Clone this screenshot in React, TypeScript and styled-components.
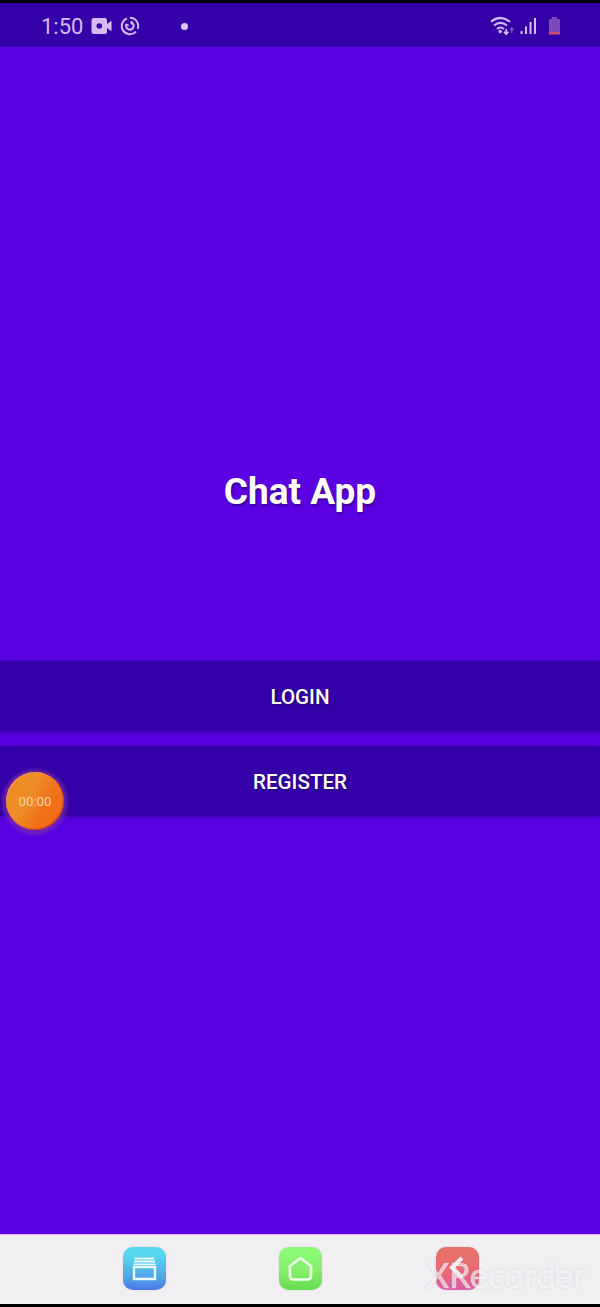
import React from 'react';
import styled, { createGlobalStyle } from 'styled-components';

const GlobalStyle = createGlobalStyle`
  * { box-sizing: border-box; }
  body { margin: 0; background: #000; }
`;

const Screen = styled.div`
  position: relative;
  display: flex;
  flex-direction: column;
  width: 600px;
  height: 1307px;
  padding: 3px 0;
  overflow: hidden;
  background: #000;
  font-family: Roboto, 'Liberation Sans', sans-serif;
`;

const StatusBar = styled.header`
  display: flex;
  justify-content: space-between;
  flex: 0 0 44px;
  padding: 2px 39px 0 41px;
  background: #3400a8;
  color: #d6bcf5;
`;

const StatusGroup = styled.div`
  display: flex;
  align-items: center;
`;

const Clock = styled.span`
  width: 50px;
  padding-top: 2px;
  font-size: 22px;
  line-height: 40px;
`;

const Dot = styled.span`
  width: 7px;
  height: 7px;
  margin-left: 41px;
  border-radius: 50%;
  background: #dcc8fa;
`;

const Content = styled.main`
  display: flex;
  flex-direction: column;
  flex: 1;
  background: #5a00e2;
`;

const Title = styled.h1`
  margin: 423px 0 0;
  height: 44px;
  color: #fff;
  font-size: 37px;
  font-weight: 700;
  line-height: 44px;
  text-align: center;
  text-shadow: 1px 2px 2px rgba(30, 0, 100, 0.6);
`;

const Actions = styled.div`
  display: flex;
  flex-direction: column;
  gap: 15px;
  margin-top: 147px;
`;

const ActionButton = styled.button`
  height: 70px;
  padding: 2px 0 0;
  border: 0;
  background: #3400a8;
  box-shadow: 0 1px 4px rgba(45, 0, 140, 0.75);
  color: #fff;
  font-family: inherit;
  font-size: 20.6px;
  font-weight: 500;
  line-height: 68px;
  text-shadow: 1px 1px 2px rgba(20, 0, 60, 0.6);
`;

const RecorderBubble = styled.div`
  position: absolute;
  left: 6px;
  top: 772px;
  width: 58px;
  height: 58px;
  border-radius: 50%;
  background: linear-gradient(120deg, #ee8d26 40%, #f07018 66%);
  box-shadow: inset 1px 1px 1px #f48a60, inset -1px -1px 1px #c43c28,
    0 1px 3px 4px rgba(125, 55, 165, 0.55);
  color: #f6d3a5;
  font-size: 13.3px;
  line-height: 59px;
  text-align: center;
`;

const NavBar = styled.nav`
  display: flex;
  gap: 113.4px;
  flex: 0 0 70px;
  padding: 12px 0 0 123px;
  border-top: 1px solid #d9b6f7;
  background: #f1eff2;
`;

const NavTile = styled.div<{ $fill: string }>`
  display: flex;
  align-items: center;
  justify-content: center;
  width: 43px;
  height: 43px;
  border-radius: 10px;
  background: ${({ $fill }) => $fill};
  box-shadow: 0 0 1px rgba(90, 90, 100, 0.5);
`;

const Watermark = styled.div`
  position: absolute;
  left: 427px;
  top: 1254px;
  color: rgba(255, 255, 255, 0.6);
  font-family: Lato, sans-serif;
  font-size: 34px;
  line-height: 42px;
  letter-spacing: 0.3px;
  -webkit-text-stroke: 0.7px rgba(255, 255, 255, 0.6);
  text-shadow: 0 0 3px rgba(120, 110, 130, 0.28);
  white-space: nowrap;
`;

const StatusIcon = styled.svg<{ $gap?: number }>`
  display: block;
  margin-left: ${({ $gap = 0 }) => $gap}px;
`;

export default function App() {
  return (
    <>
      <GlobalStyle />
      <Screen>
        <StatusBar>
          <StatusGroup>
            <Clock>1:50</Clock>
            <StatusIcon width="22" height="18" viewBox="0 0 22 18">
              <path fill="currentColor" fillRule="evenodd" d="M3 1h10.500a2.500 2.500 0 0 1 2.500 2.500V7l4.500-3.200v10.400L16 11v3.500a2.500 2.500 0 0 1-2.500 2.500H3A2.500 2.500 0 0 1 .500 14.500v-11A2.500 2.500 0 0 1 3 1Zm5.300 5.200a2.800 2.800 0 1 0 0 5.600 2.800 2.800 0 0 0 0-5.600Z" />
            </StatusIcon>
            <StatusIcon $gap={7} width="20" height="20" viewBox="0 0 20 20" fill="none" stroke="currentColor" strokeWidth="2">
              <path d="M10 1.800a8.200 8.200 0 0 1 7.700 11M16 15.600A8.200 8.200 0 1 1 7 2.400" />
              <path d="M6.500 9a3.600 3.600 0 1 0 5-2.300" strokeWidth="2" />
              <path d="M5 9.700 6.700 8l2 1.600M12.500 5l-1.700 1.600 1.500 2" strokeWidth="1.300" />
            </StatusIcon>
            <Dot />
          </StatusGroup>
          <StatusGroup>
            <StatusIcon width="24" height="20" viewBox="0 0 24 20" fill="none" stroke="currentColor" strokeWidth="2">
              <path d="M1 5.800Q10.500-2 20 5.800M4 9.500q6.500-5.300 13 0M7 13q3.500-3 7 0" />
              <circle cx="10.200" cy="15.500" r="1.700" fill="currentColor" stroke="none" />
              <path d="M16.200 13v5M14 15.800l2.200 2.400 2.200-2.400" strokeWidth="1.700" />
              <path d="M21.800 17v-5m-1.700 2 1.700-2 1.700 2" stroke="#8656cc" strokeWidth="1.300" />
            </StatusIcon>
            <StatusIcon $gap={6} width="17" height="18" viewBox="0 0 17 18" stroke="currentColor" strokeWidth="2">
              <path d="M1.500 17v-3M6 17V9.500M10.500 17V5M15 17V1" />
            </StatusIcon>
            <StatusIcon $gap={11} width="13" height="20" viewBox="0 0 13 20">
              <path fill="#7849bd" d="M1 3h3V1h5v2h3v15H1Z" />
              <path d="M3 5v10M6 4v11M9 5v10" stroke="#9355b0" strokeDasharray="1 2" />
              <path fill="#c94e70" d="M1 16h11v2.500H1Z" />
            </StatusIcon>
          </StatusGroup>
        </StatusBar>
        <Content>
          <Title>Chat App</Title>
          <Actions>
            <ActionButton>LOGIN</ActionButton>
            <ActionButton>REGISTER</ActionButton>
          </Actions>
        </Content>
        <NavBar>
          <NavTile $fill="linear-gradient(#55d8ed 20%, #4fa5e8 70%, #4b79e6)">
            <svg width="27" height="27" viewBox="0 0 27 27" fill="none" stroke="#e9fbff">
              <path d="M4 3.500h19M3 6.500h21" strokeWidth="1.800" />
              <path d="M2.500 9.300h22" strokeWidth="1.500" />
              <path d="M3 12h21v12H3Z" strokeWidth="2.400" />
            </svg>
          </NavTile>
          <NavTile $fill="linear-gradient(#8cfa75 15%, #83ed68 60%, #65dc50)">
            <svg width="27" height="27" viewBox="0 0 27 27" fill="none" stroke="#edffe9" strokeWidth="2.700" strokeLinejoin="round">
              <path d="M13.500 3 3 11v10q0 3.500 3.500 3.500h14q3.500 0 3.500-3.500V11Z" />
            </svg>
          </NavTile>
          <NavTile $fill="linear-gradient(#e8716a 15%, #ea6679 65%, #d960b0)">
            <svg width="27" height="27" viewBox="0 0 27 27" fill="none" stroke="#fff0f0" strokeWidth="4">
              <path d="M18 3 8 12.500l10 10" />
            </svg>
          </NavTile>
        </NavBar>
        <Watermark>XRecorder</Watermark>
        <RecorderBubble>00:00</RecorderBubble>
      </Screen>
    </>
  );
}
